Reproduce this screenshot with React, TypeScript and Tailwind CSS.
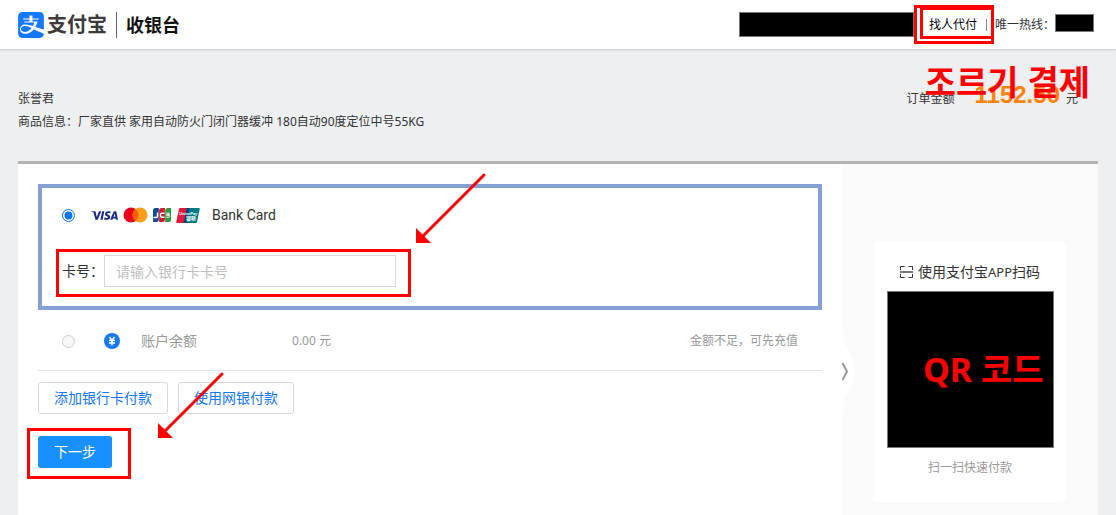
import React, { useState } from 'react';
import clsx from 'clsx';
import { SiAlipay, SiVisa } from 'react-icons/si';

type PayMethod = 'card' | 'balance';

// red marker frame, sized by its className
const Mark = ({ className }: { className: string }) => (
  <span className={clsx('pointer-events-none absolute border-[3px] border-[#ff0000]', className)} />
);

const Note = ({ className, children }: { className: string; children: React.ReactNode }) => (
  <p
    className={clsx(
      'pointer-events-none absolute whitespace-nowrap font-["Noto_Sans","Noto_Sans_CJK_KR",sans-serif] text-[34px] leading-10 font-bold text-[#ff0000]',
      className,
    )}
  >
    {children}
  </p>
);

const Arrow = ({ size, className }: { size: number; className: string }) => (
  <svg
    width={size}
    height={size}
    viewBox={`0 0 ${size} ${size}`}
    className={clsx('pointer-events-none absolute overflow-visible', className)}
    fill="#ff0000"
  >
    <path d={`M7 ${size - 7}L${size - 1} 1`} stroke="#ff0000" strokeWidth="3" strokeLinecap="round" />
    <path d={`M0 ${size - 15}L15 ${size}H0Z`} />
  </svg>
);

const CardBrands = () => (
  <div className="flex items-center gap-[5px]">
    <SiVisa size={27} color="#1a2a8c" />
    <svg width="25" height="16" viewBox="0 0 25 16">
      <circle cx="8" cy="8" r="7.5" fill="#eb001b" />
      <circle cx="17" cy="8" r="7.5" fill="#f79e1b" />
      <path d="M12.5 2a7.5 7.5 0 0 1 0 12a7.5 7.5 0 0 1 0-12Z" fill="#ff5f00" />
    </svg>
    <svg width="18" height="14" viewBox="0 0 18 14">
      <path d="M2.5 0H5.8V11.5A2.5 2.5 0 0 1 3.3 14H0V2.5A2.5 2.5 0 0 1 2.5 0Z" fill="#0e4c96" />
      <path d="M8.6 0H11.9V11.5A2.5 2.5 0 0 1 9.4 14H6.1V2.5A2.5 2.5 0 0 1 8.6 0Z" fill="#d7182a" />
      <path d="M14.7 0H18V11.5A2.5 2.5 0 0 1 15.5 14H12.2V2.5A2.5 2.5 0 0 1 14.7 0Z" fill="#2a9a3e" />
      <g stroke="#fff" strokeWidth="1.5" fill="none">
        <path d="M4.5 4.5V8.2Q4.5 9.5 3 9.5H0.5" />
        <path d="M11.5 5.2H8.5Q7.5 5.2 7.5 7T8.5 9.2H11.5" />
        <path d="M13.3 5.2H16Q17 6.2 15.8 7H13.3H16Q17.2 8.5 16 9.3H13.3" strokeWidth="1" />
      </g>
    </svg>
    <svg width="24" height="15" viewBox="0 0 24 15">
      <path d="M4 0H11L8 15H1Q0 15 .2 14L3 1Q3.2 0 4 0Z" fill="#e21836" />
      <path d="M10.5 0H17.5L14.5 15H7.5Z" fill="#00447c" />
      <path d="M13.5 0H23Q24 0 23.8 1L21 14Q20.8 15 20 15H10.5Z" fill="#007b84" />
      <text x="3" y="7" fontSize="4" fontWeight="700" fontStyle="italic" fill="#fff" fontFamily="Liberation Sans">
        UnionPay
      </text>
      <text x="10" y="12" fontSize="5" fontWeight="700" fill="#fff" fontFamily="Noto Sans CJK SC">
        银联
      </text>
    </svg>
  </div>
);

const ScanIcon = () => (
  <svg width="13" height="12" viewBox="0 0 13 12" fill="none" stroke="#333">
    <path d="M.5 4V.5H4.5M8.5 .5H12.5V4M12.5 8V11.5H8.5M4.5 11.5H.5V8" />
    <path d="M0 6H13" stroke="#777" strokeWidth="2" />
  </svg>
);

const Header = () => (
  <header className="flex h-[50px] items-center justify-between border-b border-[#d3d4d6] bg-white px-[18px] shadow-[0_1px_2px_#e0e0e2]">
    <div className="flex items-center">
      <SiAlipay size={26} color="#1677ff" />
      <span className="ml-[3px] text-xl font-bold text-[#3e3a39]">支付宝</span>
      <span className="mx-[9px] h-[26px] w-px bg-[#666]" />
      <h1 className="text-lg font-bold text-[#111]">收银台</h1>
    </div>

    <div className="flex items-center pr-1 text-xs text-[#333]">
      <span className="h-[25px] w-[175px] border border-[#777] bg-black" />
      <div className="relative ml-[15px]">
        <a href="#proxy" className="text-black">找人代付</a>
        <Mark className="-top-3 -left-[15px] h-[39px] w-[80px]" />
        <Mark className="-top-[10px] -left-[9px] h-[32px] w-[74px]" />
      </div>
      <span className="ml-[9px] h-3 w-px bg-[#888]" />
      <span className="ml-2">唯一热线：</span>
      <span className="mb-1 h-[18px] w-[39px] border border-[#777] bg-black" />
    </div>
  </header>
);

const OrderInfo = () => (
  <section className="relative flex items-start justify-between px-[18px] pt-[37px] pb-7 text-xs leading-[23px] text-[#333]">
    <div>
      <p>张誉君</p>
      <p>商品信息：厂家直供 家用自动防火门闭门器缓冲 180自动90度定位中号55KG</p>
    </div>
    <div className="-mt-1 flex items-baseline pr-5">
      <span>订单金额</span>
      <strong className='ml-5 font-["Liberation_Sans",sans-serif] text-2xl leading-[23px] text-[#ff8208]'>1152.50</strong>
      <span className="ml-[6px]">元</span>
    </div>
    <Note className="top-3 right-[26px]">조르기 결제</Note>
  </section>
);

const QrPanel = () => (
  <aside className="relative w-64 shrink-0 bg-[#fafafa] px-8 pt-[77px]">
    <button type="button" aria-label="展开" className="absolute top-[157px] left-0 h-[101px] w-[13px]">
      <svg width="13" height="101" viewBox="0 0 13 101">
        <path d="M0 0C0 34 13 30 13 50S0 67 0 101Z" fill="#fff" />
        <path d="M0.5 42L5 50.5L0.5 59" fill="none" stroke="#999" strokeWidth="2" />
      </svg>
    </button>
    <div className="flex flex-col items-center rounded bg-white pt-5 pb-6">
      <h2 className="flex items-center gap-[5px] text-sm leading-[22px] text-[#333]">
        <ScanIcon />
        <span>使用支付宝<span className="text-[13px]">APP</span>扫码</span>
      </h2>
      <div className="relative mt-2 h-[157px] w-[167px] border border-[#777] bg-black">
        <Note className="top-[57px] right-[9px]">QR 코드</Note>
      </div>
      <p className="mt-[10px] text-xs leading-5 text-[#999]">扫一扫快速付款</p>
    </div>
  </aside>
);

const linkButton = 'h-8 rounded-[3px] border border-[#d9d9d9] bg-white px-[15px] text-sm text-[#1677ff]';

export default function App() {
  const [method, setMethod] = useState<PayMethod>('card');
  const [cardNo, setCardNo] = useState('');

  return (
    <div className='flex min-h-screen flex-col bg-[#eeeff1] font-["Noto_Sans","Noto_Sans_CJK_SC",sans-serif]'>
      <Header />
      <OrderInfo />

      <main className="mx-[18px] flex flex-1 border-t-[3px] border-[#b3b3b3] bg-white">
        <form className="relative min-w-0 flex-1 px-5 pt-5" onSubmit={(e) => e.preventDefault()}>
          {/* bank card */}
          <div className="border-4 border-[#84a0d4] px-5 pt-[11px] pb-[19px]">
            <label className="flex h-8 items-center text-sm text-[#333]">
              <input
                type="radio"
                name="method"
                className="mr-4 size-[13px]"
                checked={method === 'card'}
                onChange={() => setMethod('card')}
              />
              <CardBrands />
              <span className='ml-3 font-["Roboto",sans-serif]'>Bank Card</span>
            </label>
            <div className="relative mt-6 flex w-fit items-center text-sm text-[#333]">
              <label htmlFor="card-no">卡号：</label>
              <input
                id="card-no"
                className="h-8 w-[292px] border border-[#d9d9d9] px-[11px] outline-none placeholder:text-[#bfbfbf]"
                placeholder="请输入银行卡卡号"
                value={cardNo}
                onChange={(e) => setCardNo(e.target.value)}
              />
              <Mark className="-top-[6px] -left-[6px] h-12 w-[355px]" />
            </div>
          </div>

          {/* account balance */}
          <label className="flex h-[61px] items-center border-b border-[#e5e5e5] px-6 pt-[2px] text-xs text-[#999]">
            <input type="radio" name="method" className="mr-[29px] size-[13px]" disabled />
            <svg width="16" height="16" viewBox="0 0 16 16">
              <circle cx="8" cy="8" r="8" fill="#1677ff" />
              <path d="M5.5 4L8 7.5L10.5 4M8 7.5V12.5M5 7.5H11M5 10H11" fill="none" stroke="#fff" strokeWidth="1.5" />
            </svg>
            <span className="ml-[21px] w-[151px] text-sm">账户余额</span>
            <span>0.00 元</span>
            <span className="ml-auto">金额不足，可先充值</span>
          </label>

          <div className="mt-[11px] flex gap-[10px]">
            <button type="button" className={linkButton}>添加银行卡付款</button>
            <button type="button" className={linkButton}>使用网银付款</button>
          </div>
          <div className="relative mt-[22px] w-fit">
            <button type="submit" className="h-8 rounded-[3px] bg-[#1890ff] px-4 text-sm text-white">下一步</button>
            <Mark className="-top-2 -left-[11px] h-[51px] w-[104px]" />
          </div>

          <Arrow size={69} className="top-[10px] left-[398px]" />
          <Arrow size={65} className="top-[209px] left-[140px]" />
        </form>
        <QrPanel />
      </main>
    </div>
  );
}
